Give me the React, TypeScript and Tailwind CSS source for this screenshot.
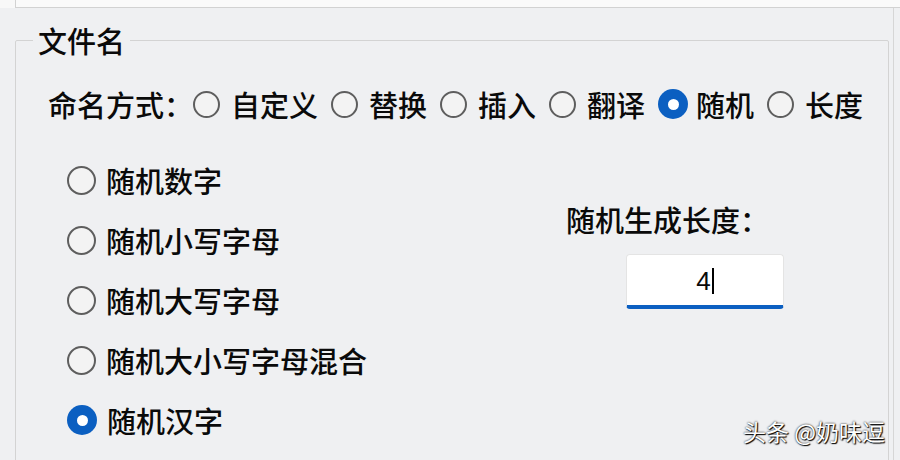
import React from 'react';

const methods = ['自定义', '替换', '插入', '翻译', '随机', '长度'];
const randomTypes = ['随机数字', '随机小写字母', '随机大写字母', '随机大小写字母混合', '随机汉字'];

function Radio({ checked, size = 27 }: { checked?: boolean; size?: number }) {
  if (checked) {
    return (
      <span className="flex h-[30px] w-[30px] shrink-0 items-center justify-center rounded-full bg-[#0b5fc1]">
        <span className="h-[11px] w-[11px] rounded-full bg-white" />
      </span>
    );
  }
  return (
    <span
      className={
        size > 27
          ? 'block h-[29px] w-[29px] shrink-0 rounded-full border-2 border-[#5e5e5e] bg-[#f3f3f3]'
          : 'block h-[27px] w-[27px] shrink-0 rounded-full border-2 border-[#5e5e5e] bg-[#f3f3f3]'
      }
    />
  );
}

export default function App() {
  return (
    <div className="relative flex h-[460px] w-[900px] flex-col overflow-hidden bg-[#eff0f2] font-['Noto_Sans_CJK_SC',sans-serif] text-[29px] font-medium leading-[35px] text-[#0a0a0a]">
      {/* bottom edge of the previous group */}
      <div className="h-[8px] shrink-0 bg-[#f8f8f8]">
        <div className="ml-[15px] h-full border-b border-l border-[#d2d2d2] bg-[#fafafa]" />
      </div>

      <div className="flex-1 w-[894px] border-r border-[#d6d6d6]">
        <fieldset className="ml-[15px] mt-[15px] h-[460px] w-[874px] rounded-[2px] border border-[#d3d3d3]">
          <legend className="ml-[17px] px-[5px]">文件名</legend>

          {/* naming mode */}
          <div className="mt-[16px] flex h-[60px] items-center pl-[32px]">
            <span>命名方式：</span>
            <div className="flex items-center gap-[13px]">
              {methods.map((m) => (
                <label key={m} className="flex items-center gap-[11px]">
                  <Radio checked={m === '随机'} />
                  <span className={m === '随机' ? '-ml-[3px]' : ''}>{m}</span>
                </label>
              ))}
            </div>
          </div>

          <div className="mt-[16px] flex">
            <div className="flex w-[550px] flex-col pl-[51px]">
              {randomTypes.map((t) => (
                <label key={t} className="flex h-[60px] items-center gap-[10px]">
                  <Radio checked={t === '随机汉字'} size={29} />
                  <span>{t}</span>
                </label>
              ))}
            </div>

            <div className="flex flex-col items-start pt-[52px]">
              <span>随机生成长度：</span>
              <div className="ml-[60px] mt-[17px] flex h-[55px] w-[158px] items-center justify-center rounded-[4px] border border-[#e4e4e4] border-b-[4px] border-b-[#0b5fc1] bg-white pt-[2px] text-[26px]">
                <span className="font-['Liberation_Sans',sans-serif]">4</span>
                <span className="ml-[1px] inline-block h-[26px] w-[2px] bg-black" />
              </div>
            </div>
          </div>
        </fieldset>
      </div>

      {/* watermark */}
      <div className="absolute left-[743px] top-[416px] text-[23px] font-normal leading-[30px] text-white [text-shadow:0_0_2px_#000,1px_1px_1px_#000]">
        头条 @奶味逗
      </div>
    </div>
  );
}
